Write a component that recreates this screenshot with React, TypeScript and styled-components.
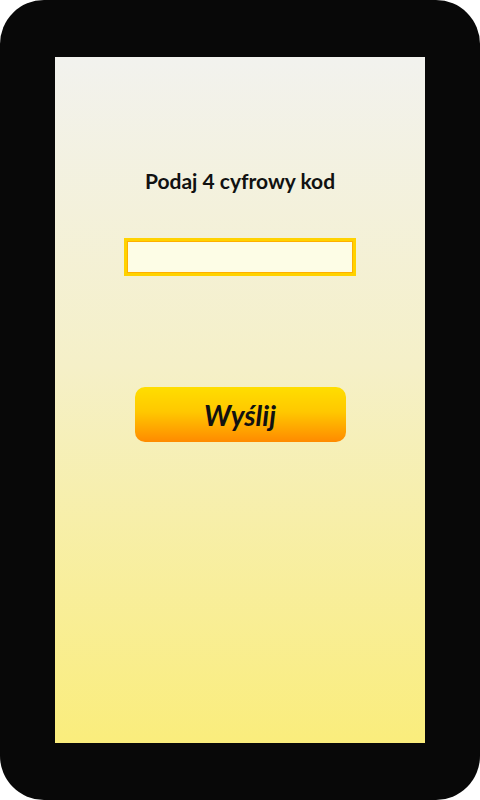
import React from "react";
import styled, { createGlobalStyle } from "styled-components";

const Global = createGlobalStyle`
  html, body { margin: 0; padding: 0; background: #ffffff; }
  body { font-family: Lato, "Open Sans", sans-serif; }
`;

const Frame = styled.div`
  width: 480px;
  height: 800px;
  box-sizing: border-box;
  background: #080808;
  border-radius: 44px;
  padding: 57px 55px;
  display: flex;
`;

const Screen = styled.div`
  flex: 1;
  background: linear-gradient(180deg, #f2f2ee 0%, #f5f0c8 45%, #faed7c 100%);
  display: flex;
  flex-direction: column;
  align-items: center;
  padding-top: 111px;
`;

const Title = styled.h1`
  margin: 0;
  font-family: Lato, sans-serif;
  font-weight: 700;
  font-size: 21px;
  line-height: 26px;
  color: #111111;
`;

const CodeInput = styled.input`
  margin-top: 44px;
  width: 232px;
  height: 38px;
  box-sizing: border-box;
  border: 3px solid #ffd200;
  box-shadow: inset 0 0 0 1px #ffb000;
  background: #fdfde6;
  outline: none;
  font-family: Lato, sans-serif;
  font-size: 18px;
  padding: 0 8px;
`;

const SendButton = styled.button`
  margin-top: 111px;
  width: 211px;
  height: 55px;
  border: none;
  border-radius: 10px;
  background: linear-gradient(180deg, #ffde00 0%, #ffc800 45%, #ff8a00 100%);
  font-family: Lato, sans-serif;
  font-style: italic;
  font-weight: 700;
  font-size: 28px;
  color: #111111;
  cursor: pointer;
  padding: 0;
`;

export default function App() {
  return (
    <>
      <Global />
      <Frame>
        <Screen>
          <Title>Podaj 4 cyfrowy kod</Title>
          <CodeInput type="text" inputMode="numeric" maxLength={4} />
          <SendButton>Wyślij</SendButton>
        </Screen>
      </Frame>
    </>
  );
}
